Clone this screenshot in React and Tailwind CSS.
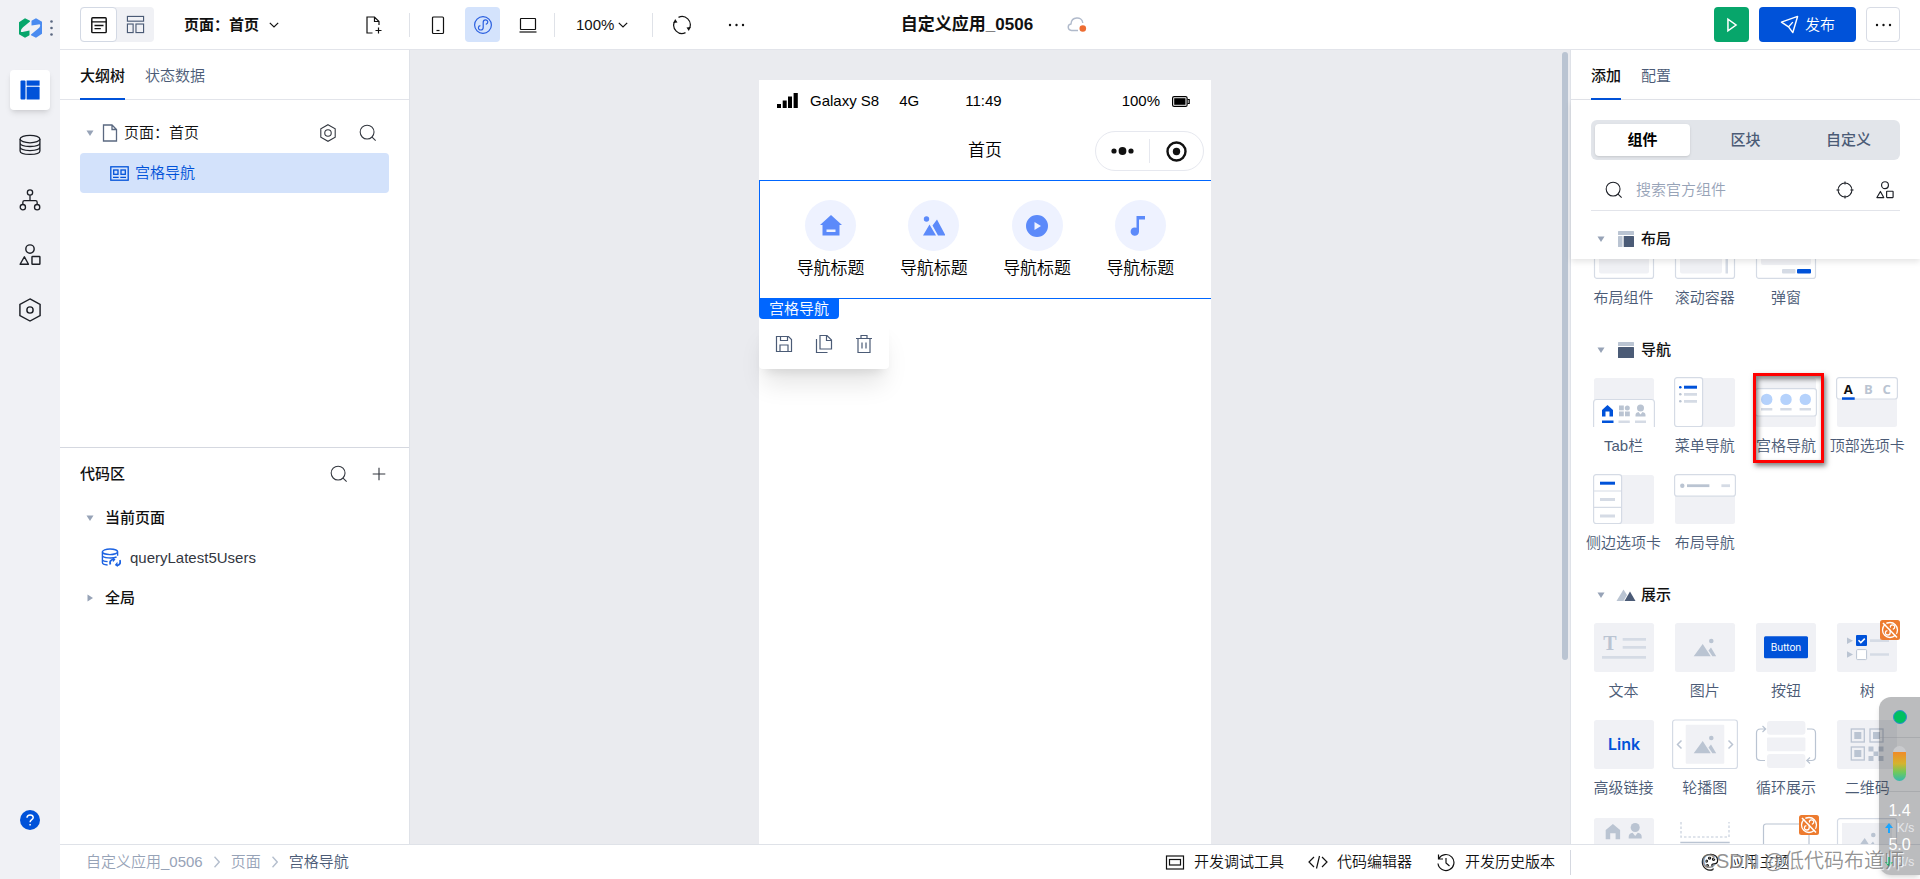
import { useState } from 'react';

const BLUE = '#0052d9';
const SOFT = '#f0f1f5';
const LINE = '#d5dbe5';
const MID = '#bac4d2';

function Icon({ size = 20, color = 'currentColor', sw = 1.2, children, className }) {
  return (
    <svg width={size} height={size} viewBox="0 0 20 20" fill="none" stroke={color} strokeWidth={sw} className={className} aria-hidden="true">
      {children}
    </svg>
  );
}

const SearchIcon = ({ size = 18 }) => (
  <Icon size={size}><circle cx="9" cy="9" r="7.7" /><path d="M14.5 14.5l4 4" /></Icon>
);

const ChevronDown = () => (
  <svg width="10" height="6" viewBox="0 0 10 6" fill="none" stroke="currentColor" strokeWidth="1.2" aria-hidden="true"><path d="M.8.8L5 5 9.2.8" /></svg>
);

const ChevronRight = () => (
  <svg width="6" height="12" viewBox="0 0 6 12" fill="none" stroke="#b5bfce" strokeWidth="1.4" aria-hidden="true"><path d="M.5.8L5.2 6 .5 11.2" /></svg>
);

const Caret = ({ closed }) => (
  <svg width="8" height="8" viewBox="0 0 8 8" fill="#97a3b7" aria-hidden="true">
    {closed ? <path d="M1.5.5v7L7 4z" /> : <path d="M.5 1.5h7L4 7z" />}
  </svg>
);

const ShapesIcon = ({ size = 20 }) => (
  <Icon size={size} sw={1.3}><circle cx="10" cy="4.6" r="3.8" /><path d="M4.9 11.6L1 18.4h7.600z" strokeLinejoin="round" /><rect x="11.8" y="11.4" width="7.200" height="7" rx=".5" /></Icon>
);

const Dots = () => (
  <svg width="17" height="4" viewBox="0 0 17 4" fill="currentColor" aria-hidden="true"><circle cx="2" cy="2" r="1.2" /><circle cx="8.5" cy="2" r="1.2" /><circle cx="15" cy="2" r="1.2" /></svg>
);

const LINK_CURVE = 'M10.2 12.6V7.4c0-3.2 4.6-3.2 4.6-.3 0 1.6-1.1 2-2 2.2M10.2 7.2v5.2c0 3.4-4.8 3.4-4.8.4 0-1.6 1.1-2.1 2-2.2';

function Sidebar() {
  const item = 'flex h-10 w-10 items-center justify-center rounded text-[#1c1f26]';
  return (
    <aside className="flex w-[60px] shrink-0 flex-col items-center bg-[#f0f1f5] pb-[39px]">
      <div className="flex h-[50px] w-full items-center justify-end gap-2 pt-[5px] pr-[7px]">
        <svg width="23" height="20" viewBox="0 0 23 20" aria-label="logo">
          <path d="M0 4.200L6 .3l5 2.400V17L6 19.700 0 16.200z" fill="#07a66b" />
          <path d="M23 15.800l-6 3.900-5-2.400V3L17 .3l6 3.500z" fill="#4a8bf0" />
          <path d="M1.800 13.200Q1.800 11 4 9.200L11 3.600 12.500 2v5.600l7-1.200q1.700-.2 1.700 1Q21.200 9 19 10.800L12 16.400 10.500 18v-5.600l-7 1.600q-1.500.3-1.700-.8z" fill={SOFT} />
        </svg>
        <svg width="3" height="16" viewBox="0 0 3 16" fill="#5a6880" aria-hidden="true"><circle cx="1.5" cy="1.5" r="1.3" /><circle cx="1.5" cy="8" r="1.3" /><circle cx="1.5" cy="14.5" r="1.3" /></svg>
      </div>
      <nav className="mt-5 flex flex-col gap-[15px]">
        <button aria-label="页面" className="flex h-10 w-10 items-center justify-center rounded bg-white shadow-md">
          <svg width="20" height="20" viewBox="0 0 20 20" fill={BLUE}><rect x=".5" y=".5" width="5" height="19" rx="1" /><rect x="6.6" y=".5" width="13" height="5.2" /><rect x="6.6" y="6.8" width="13" height="12.7" rx=".6" /></svg>
        </button>
        <button aria-label="数据" className={item}>
          <Icon size={22}><ellipse cx="10" cy="4.600" rx="9" ry="3.400" /><path d="M1 4.600v10.800c0 4.200 18 4.200 18 0V4.600M1 8.200c0 4.200 18 4.200 18 0M1 11.900c0 4.200 18 4.200 18 0" /></Icon>
        </button>
        <button aria-label="流程" className={item}>
          <Icon size={22}><circle cx="10" cy="3.200" r="2.400" /><circle cx="3.500" cy="16.500" r="2.400" /><circle cx="16.500" cy="16.500" r="2.400" /><path d="M10 5.600v4.900M3.500 14v-2q0-1.500 1.500-1.500h10q1.500 0 1.500 1.500v2" /></Icon>
        </button>
        <button aria-label="组件" className={item}><ShapesIcon size={22} /></button>
        <button aria-label="设置" className={item}>
          <Icon size={24}><path d="M10 .8l8.400 4.600v9.200L10 19.200l-8.400-4.600V5.400z" /><circle cx="10" cy="10" r="2.600" /></Icon>
        </button>
      </nav>
      <button aria-label="帮助" className="mt-auto flex h-10 w-10 shrink-0 items-center justify-center">
        <svg width="20" height="20" viewBox="0 0 20 20"><circle cx="10" cy="10" r="10" fill={BLUE} /><path d="M7 7.800c0-4 6.200-3.600 6.200-.3 0 2.200-3.100 2.200-3.100 4.700M10.100 14v1.600" fill="none" stroke="#fff" strokeWidth="1.500" /></svg>
      </button>
    </aside>
  );
}

function Header() {
  const tool = 'flex h-[35px] w-[35px] items-center justify-center rounded';
  return (
    <header className="flex h-[50px] shrink-0 items-center border-b border-[#e2e4ea] px-5">
      <div className="flex flex-1 items-center">
        <div className="flex rounded bg-[#f0f1f5]">
          <button aria-label="页面视图" className="flex h-[35px] w-[37px] items-center justify-center rounded border border-[#d3d9e4] bg-white">
            <Icon size={18} sw={1.6}><rect x="2" y="2" width="16" height="16.500" rx="1" /><path d="M2 6.500h16M5 10.500h10M5 14h7" /></Icon>
          </button>
          <button aria-label="布局视图" className="flex h-[35px] w-[37px] items-center justify-center text-[#4b5b76]">
            <Icon size={19}><rect x="1.500" y="1.500" width="17" height="5" /><rect x="1.500" y="9.500" width="6" height="9" /><rect x="10.500" y="9.500" width="8" height="9" /></Icon>
          </button>
        </div>
        <button className="ml-[30px] flex items-center gap-[10px] font-bold">页面：首页 <ChevronDown /></button>
        <button aria-label="新建页面" className="ml-[77px] flex h-[35px] w-[35px] items-center justify-center">
          <Icon size={20}><path d="M8.500 18H3V2h7.500l4.500 4.500V10M10.500 2v4.500H15M14.500 12.500v6M11.500 15.500h6" /></Icon>
        </button>
        <i className="ml-[18px] h-6 w-px bg-[#dfe2e8]" />
        <button aria-label="手机" className={`ml-[10px] ${tool}`}>
          <Icon size={20}><rect x="4.500" y="2" width="11" height="16.500" rx="1" /><path d="M8.500 15.500h3" /></Icon>
        </button>
        <button aria-label="小程序" className={`ml-[10px] bg-[#d4e3fc] text-[#2a5fdf] ${tool}`}>
          <Icon size={20}><circle cx="10" cy="10" r="8.400" /><path d={LINK_CURVE} /></Icon>
        </button>
        <button aria-label="电脑" className={`ml-[10px] ${tool}`}>
          <Icon size={20}><rect x="2.500" y="3.500" width="15" height="11" rx=".5" /><path d="M1.500 17h17" /></Icon>
        </button>
        <i className="ml-[9px] h-6 w-px bg-[#dfe2e8]" />
        <button className="ml-[21px] flex items-center gap-1">100% <ChevronDown /></button>
        <i className="ml-6 h-6 w-px bg-[#dfe2e8]" />
        <button aria-label="刷新" className={`ml-[11px] ${tool}`}>
          <Icon size={20}><path d="M6.500 2.400a8.200 8.200 0 0 1 11 10.800M13.500 17.600A8.200 8.200 0 0 1 2.500 6.800" /><path d="M1.200 8l2-4 2.300 3.600zM18.800 12l-2 4-2.300-3.600z" fill="currentColor" stroke="none" /></Icon>
        </button>
        <button aria-label="更多" className={`ml-5 ${tool}`}><Dots /></button>
      </div>
      <div className="flex items-center gap-[34px] pl-2">
        <h1 className="text-[17px] font-bold">自定义应用_0506</h1>
        <svg width="20" height="16" viewBox="0 0 20 16" aria-hidden="true">
          <path d="M11 13.500H4.500C.2 13 .2 7.500 4 7c.4-7.500 11-8 11.800-1" fill="none" stroke="#b0bacb" strokeWidth="1.400" />
          <circle cx="15.800" cy="11.500" r="3.300" fill="#ed6c32" />
        </svg>
      </div>
      <div className="flex flex-1 justify-end gap-[10px]">
        <button aria-label="预览" className="flex h-[35px] w-[35px] items-center justify-center rounded bg-[#07a66b] text-white">
          <Icon size={18} sw={1.700}><path d="M5.500 3.500v13l9-6.500z" /></Icon>
        </button>
        <button className="flex h-[35px] w-[97px] items-center justify-center gap-1.5 rounded bg-[#0052d9] text-white">
          <Icon size={19} sw={1.500}><path d="M1.500 7.500l17-6-5 17-4.500-6zM9 12.500l4.500-5" strokeLinejoin="round" /></Icon>
          发布
        </button>
        <button aria-label="更多操作" className="flex h-[35px] w-[34px] items-center justify-center rounded border border-[#d8dce5]"><Dots /></button>
      </div>
    </header>
  );
}

function Tabs({ items }) {
  return (
    <div role="tablist" className="flex h-[50px] shrink-0 gap-5 border-b border-[#e2e4ea] px-5">
      {items.map((t, i) => (
        <button key={t} role="tab" aria-selected={i === 0} className={i === 0 ? '-mb-px border-b-2 border-[#0052d9] pt-[3px] font-medium' : 'pt-0.5 text-[#4b5b76]'}>{t}</button>
      ))}
    </div>
  );
}

function LeftPanel() {
  return (
    <section className="flex w-[350px] shrink-0 flex-col border-r border-[#dfe2e8]">
      <div className="flex flex-1 flex-col">
        <Tabs items={['大纲树', '状态数据']} />
        <div className="px-5 pt-[13px]">
          <div className="flex h-10 items-center pr-3 pl-1.5">
            <Caret />
            <svg width="16" height="18" viewBox="0 0 16 18" fill="none" stroke="#5a6880" strokeWidth="1.300" className="mr-1.5 ml-2" aria-hidden="true"><path d="M1.500 1h8.500l4.500 4.500V17h-13zM10 1v4.500h4.500" /></svg>
            <span>页面：首页</span>
            <button aria-label="页面设置" className="ml-auto text-[#33373f]"><Icon size={18}><path d="M10 .8l8 4.600v9.200l-8 4.600-8-4.600V5.400z" /><circle cx="10" cy="10" r="3.600" /></Icon></button>
            <button aria-label="搜索节点" className="ml-[22px] text-[#33373f]"><SearchIcon /></button>
          </div>
          <div className="flex h-10 items-center gap-1.5 rounded bg-[#d3e2fb] pl-[30px] text-[#0052d9]">
            <svg width="19" height="15" viewBox="0 0 19 15" fill="none" stroke="currentColor" strokeWidth="1.300" aria-hidden="true"><rect x=".8" y=".8" width="17.400" height="13.400" /><rect x="3.700" y="4" width="4.300" height="4.300" /><rect x="11" y="4" width="4.300" height="4.300" /><path d="M3 11.300h5.700M10.300 11.300H16" /></svg>
            宫格导航
          </div>
        </div>
      </div>
      <div className="flex-1 border-t border-[#d5d8e0]">
        <div className="flex h-[50px] items-center px-5 pt-0.5">
          <h2 className="font-medium">代码区</h2>
          <button aria-label="搜索代码" className="ml-auto text-[#33373f]"><SearchIcon /></button>
          <button aria-label="新建" className="mr-[3px] ml-6 text-[#33373f]"><Icon size={14} sw={1.600}><path d="M10 1v18M1 10h18" /></Icon></button>
        </div>
        <div className="flex h-10 items-center gap-[11px] pl-[26px] font-medium"><Caret /> 当前页面</div>
        <div className="flex h-10 items-center gap-[9px] pl-[41px] text-[#33373f]">
          <svg width="20" height="19" viewBox="0 0 20 19" fill="none" stroke="#1d63e2" strokeWidth="1.400" aria-hidden="true">
            <ellipse cx="9" cy="3.800" rx="7.600" ry="2.800" /><path d="M1.400 3.800v10.700c0 1.700 2.600 2.300 5.200 2.500M16.600 3.800v4M1.400 7.600c0 2.600 11 3.200 14.200 1.200M1.400 11.400c0 1.400 2.600 2 5.200 2.200" />
            <path d="M9.500 16.500c-1.200-2.600.2-5 3-5.200M18.800 12.200c1.200 2.600-.2 5-3 5.200" strokeWidth="1.800" />
            <path d="M11.500 9l3 2.400-2.600 2.800zM16.800 19l-3-2 2.600-3.200z" fill="#1d63e2" stroke="none" />
          </svg>
          queryLatest5Users
        </div>
        <div className="flex h-10 items-center gap-[11px] pl-[26px] font-medium"><Caret closed /> 全局</div>
      </div>
    </section>
  );
}

const gridNav = [
  <path d="M11 0l11 10h-2.500v10.500h-17V10H0zM6.500 14.500v2.500h9v-2.500z" fillRule="evenodd" />,
  <g><circle cx="3.500" cy="4" r="2.700" /><path d="M0 20.500L6.500 9.500 13 20.500zM9.500 10.500L14 4.500l8.500 16h-7.500z" /></g>,
  <path d="M11 0a11 11 0 1 0 0 22 11 11 0 0 0 0-22zM8.500 7l6.500 4-6.500 4z" fillRule="evenodd" />,
  <path d="M7.500 1H16v3.500h-6v12a4.200 4.200 0 1 1-2.500-3.700z" />,
];

function Canvas() {
  return (
    <main className="flex min-w-0 flex-1 bg-[#eaebef]">
      <div className="flex flex-1 justify-center pt-[30px]">
        <div className="w-[452px] bg-white text-black">
          <div className="grid h-[42px] grid-cols-[1fr_auto_1fr] items-center pr-[21px] pl-[18px]">
            <div className="flex items-center">
              <svg width="21" height="16" viewBox="0 0 21 16" aria-hidden="true"><path d="M0 11h4v4H0zM5.700 7.500h4V15h-4zM11 3.500h4V15h-4zM16.600 0h4.200v15h-4.200z" /></svg>
              <span className="ml-3">Galaxy S8</span>
              <span className="ml-5">4G</span>
            </div>
            <span>11:49</span>
            <div className="flex items-center justify-end gap-3">
              <span>100%</span>
              <svg width="18" height="11" viewBox="0 0 18 11" fill="none" stroke="#000" strokeWidth="1.200" aria-hidden="true"><rect x=".6" y=".6" width="14.500" height="9.800" rx="1.500" /><rect x="2.200" y="2.200" width="11.300" height="6.600" fill="#000" stroke="none" /><path d="M15.500 3.500h1.700v4h-1.700" /></svg>
            </div>
          </div>
          <div className="grid h-[58px] grid-cols-[1fr_auto_1fr] items-center px-[7px]">
            <span />
            <span className="text-[17px]">首页</span>
            <div className="flex h-10 w-[109px] items-center justify-self-end rounded-full border border-[#e6e8ef]">
              <button aria-label="菜单" className="flex flex-1 justify-center">
                <svg width="23" height="8" viewBox="0 0 23 8" fill="#111"><circle cx="3" cy="4" r="2.600" /><circle cx="11.500" cy="4" r="3.900" /><circle cx="20" cy="4" r="2.600" /></svg>
              </button>
              <i className="h-6 w-px bg-[#e6e8ef]" />
              <button aria-label="关闭" className="flex flex-1 justify-center">
                <svg width="21" height="21" viewBox="0 0 21 21"><circle cx="10.500" cy="10.500" r="9" fill="none" stroke="#111" strokeWidth="2.400" /><circle cx="10.500" cy="10.500" r="3.700" fill="#111" /></svg>
              </button>
            </div>
          </div>
          <div className="relative grid grid-cols-4 border-y border-l border-[#0066ff] px-[19px] pt-[19px] pb-[17px]">
            {gridNav.map((d, i) => (
              <div key={i} className="flex flex-col items-center gap-1.5">
                <div className="flex h-[51px] w-[51px] items-center justify-center rounded-full bg-[#eef2ff]">
                  <svg width="22" height="22" viewBox="0 0 22 22" fill="#5c8afa" aria-hidden="true">{d}</svg>
                </div>
                <span className="text-[17px] leading-6">导航标题</span>
              </div>
            ))}
            <div className="absolute top-full left-0 -ml-px flex flex-col items-start pt-px">
              <span className="flex h-5 w-20 items-center justify-center rounded-b bg-[#0066ff] text-white">宫格导航</span>
              <div className="flex h-[50px] w-[130px] items-center justify-center gap-5 rounded bg-white text-[#4b5b76] shadow-xl">
                <button aria-label="保存"><Icon><path d="M2.500 2.500h12l3 3v12h-15zM6.500 2.500v4h7v-4M6 17.500V11h8v6.500" /></Icon></button>
                <button aria-label="复制"><Icon><path d="M6 1.500h7l4.500 4.500v9H6zM12.500 1.500v5h5M2.500 5v13.500h11" /></Icon></button>
                <button aria-label="删除"><Icon><path d="M2 4.500h16M7 4.500v-3h6v3M4 4.500v14h12v-14M8 8.500v6M12 8.500v6" /></Icon></button>
              </div>
            </div>
          </div>
        </div>
      </div>
      <div className="flex w-[10px] justify-center pt-0.5"><i className="h-[608px] w-1.5 rounded-full bg-[#bac4d2]" /></div>
    </main>
  );
}

const Bg = () => <rect x="3" y="1" width="60" height="49" rx="2.500" fill={SOFT} />;
const Box = (p) => <rect fill="#fff" stroke={LINE} strokeWidth="1.200" rx="2.500" {...p} />;
const Mountain = () => (
  <g fill={MID}><path d="M21.700 34.200L30.700 22l8 12.200zM36.500 28.500l2.500-3 5.200 8.700h-3.800z" /><circle cx="39.300" cy="19" r="2.300" /></g>
);
const Person = ({ x, y, s = 1 }) => (
  <g fill={MID} transform={`translate(${x} ${y}) scale(${s})`}><circle cx="5" cy="3.500" r="3.500" /><path d="M0 12V10.500Q0 8 3 7.500L5 10l2-2.500q3 .5 3 3V12z" /></g>
);
const Badge = ({ y = -2 }) => (
  <g transform={`translate(46 ${y})`}>
    <rect width="20" height="20" rx="2.500" fill="#ed7b2f" />
    <g fill="none" stroke="#fff" strokeWidth="1.300"><circle cx="10" cy="10" r="7.500" /><path d={LINK_CURVE} /></g>
    <path d="M4.500 2.500l13 13.500" stroke="#ed7b2f" strokeWidth="1.300" /><path d="M3 3l14 14.500" stroke="#fff" strokeWidth="1.500" />
  </g>
);

const layoutItems = [
  ['布局组件', <><Box x="3.500" y=".6" width="59" height="48.800" /><rect x="8" y="5" width="50" height="39.500" rx="2" fill={SOFT} /></>],
  ['滚动容器', <><Box x="3.500" y=".6" width="59" height="48.800" /><rect x="8" y="5" width="42" height="39.500" rx="2" fill={SOFT} /><rect x="53.500" y="5" width="2.500" height="39.500" fill={LINE} /></>],
  ['弹窗', <><Box x="3.500" y=".6" width="59" height="48.800" /><rect x="8" y="5" width="50" height="31" rx="2" fill={SOFT} /><rect x="29" y="40" width="13.500" height="4.500" rx="1" fill={LINE} /><rect x="44" y="40" width="14" height="4.500" rx="1" fill={BLUE} /></>],
];

const navItems = [
  ['Tab栏', <>
    <Bg />
    <path d="M2.600 50V25.500q0-3 3-3h54.800q3 0 3 3V50" fill="#fff" stroke={LINE} strokeWidth="1.200" />
    <path d="M11 39.500V33l5.500-5 5.500 5v6.500h-3.500v-5h-4v5z" fill={BLUE} /><rect x="11" y="43.500" width="11.500" height="2.500" fill={BLUE} />
    <g fill={MID}><rect x="28" y="28.500" width="4.800" height="4.800" /><circle cx="36.300" cy="30.900" r="2.500" /><rect x="28" y="34.500" width="4.800" height="4.800" /><rect x="34" y="34.500" width="4.800" height="4.800" /></g>
    <Person x={44.500} y={27.500} />
    <path d="M27.500 44.800h11.300M44 44.800h11" stroke={LINE} strokeWidth="2.500" />
  </>],
  ['菜单导航', <>
    <Bg /><Box x="2.600" y=".6" width="28" height="48.900" />
    <circle cx="8.300" cy="10.200" r="1.300" fill={BLUE} /><path d="M12 10.200h13" stroke={BLUE} strokeWidth="3" />
    <g fill={MID}><circle cx="8.300" cy="17.300" r="1.300" /><circle cx="8.300" cy="24.300" r="1.300" /></g><path d="M12 17.300h13M12 24.300h13" stroke={LINE} strokeWidth="2.800" />
  </>],
  ['宫格导航', <>
    <Bg /><Box x="2.600" y="11.600" width="60.800" height="27.400" />
    <g fill="#b5d2fc"><circle cx="13.700" cy="22.400" r="5.700" /><circle cx="33" cy="22.400" r="5.700" /><circle cx="52.300" cy="22.400" r="5.700" /></g>
    <path d="M8 32.300h11.300M27.300 32.300h11.300M46.600 32.300H58" stroke={LINE} strokeWidth="2.600" />
  </>],
  ['顶部选项卡', <>
    <Bg /><Box x="2.600" y=".6" width="60.800" height="21.400" />
    <g fontSize="13" fontWeight="700" textAnchor="middle" fontFamily="Open Sans, sans-serif"><text x="14.300" y="16.500" fill="#111">A</text><text x="34.300" y="16.500" fill={MID}>B</text><text x="52.700" y="16.500" fill={MID}>C</text></g>
    <rect x="8" y="20.300" width="12.700" height="2.500" fill={BLUE} />
  </>],
  ['侧边选项卡', <>
    <Bg /><Box x="2.600" y=".6" width="28" height="48.900" /><path d="M2.600 17h28M2.600 33.300h28" stroke={LINE} strokeWidth="1.200" />
    <path d="M9 9.200h15" stroke={BLUE} strokeWidth="3" /><path d="M9 25.400h15M9 42h15" stroke={LINE} strokeWidth="3" />
  </>],
  ['布局导航', <>
    <Bg /><Box x="2.600" y=".6" width="60.800" height="21.600" /><circle cx="10.300" cy="11.700" r="2.200" fill={MID} />
    <path d="M15 11.700h22.400" stroke={MID} strokeWidth="2.800" /><path d="M49.400 11.700H58" stroke={LINE} strokeWidth="2.800" />
  </>],
];

const qr = (x, y) => <g key={`${x}${y}`}><rect x={x} y={y} width="13" height="13" fill="none" stroke={MID} strokeWidth="1.300" /><rect x={x + 3} y={y + 3} width="7" height="7" fill={MID} /></g>;

const showItems = [
  ['文本', <>
    <Bg /><text x="19" y="28" fontSize="20" fontWeight="700" textAnchor="middle" fontFamily="Liberation Serif, serif" fill={MID}>T</text>
    <path d="M31.700 17.400H55M31.700 25.400H55M11 35.300h44" stroke={LINE} strokeWidth="2.700" />
  </>],
  ['图片', <><Bg /><Mountain /></>],
  ['按钮', <><Bg /><rect x="11" y="14.300" width="44" height="22" rx="1.500" fill={BLUE} /><text x="33" y="29" fontSize="10" fontWeight="400" textAnchor="middle" fontFamily="Inter, sans-serif" fill="#fff">Button</text></>],
  ['树', <>
    <Bg /><path d="M13 15.500l6 3.300-6 3.300zM13 29.200l6 3.300-6 3.300z" fill={MID} />
    <rect x="22" y="13" width="11" height="11" rx="1" fill={BLUE} /><path d="M24.500 18.300l2.300 2.300 4-4" fill="none" stroke="#fff" strokeWidth="1.500" />
    <rect x="22.600" y="27.600" width="10" height="10" rx="1" fill="#fff" stroke={MID} /><path d="M36 18.700h19M36 32.500h19" stroke={LINE} strokeWidth="2.700" />
    <Badge />
  </>],
  ['高级链接', <><Bg /><text x="33" y="31" fontSize="16" fontWeight="600" textAnchor="middle" fontFamily="Inter, sans-serif" fill={BLUE}>Link</text></>],
  ['轮播图', <>
    <Box x=".6" y="1" width="64.800" height="48.500" /><rect x="13.700" y="5.700" width="38.600" height="39" rx="1" fill={SOFT} /><Mountain />
    <path d="M9.500 21.500l-4 4 4 4M56.500 21.500l4 4-4 4" fill="none" stroke={MID} strokeWidth="1.500" />
  </>],
  ['循环展示', <>
    <g fill={SOFT}><rect x="14" y="2" width="38.400" height="13.700" rx="3" /><rect x="14" y="18.400" width="38.400" height="13.800" rx="1" /><rect x="14" y="35" width="38.400" height="14" rx="3" /></g>
    <path d="M12 41.500H7.500q-4 0-4-4V14q0-4 4-4H12M9.500 7l3.200 3-3.200 3M54 10h4.500q4 0 4 4v23.500q0 4-4 4H54M57 38.500l-3.200 3 3.200 3" fill="none" stroke={MID} strokeWidth="1.200" />
  </>],
  ['二维码', <>
    <Bg />{qr(17.300, 10)}{qr(36, 10)}{qr(17.300, 28)}
    <path d="M34.500 27.500h5v5h-5zM44.500 27.500h5v5h-5zM39.500 32.500h5v4.500h-5zM34.500 37h5v5h-5zM44.500 37h5v5h-5z" fill={MID} />
  </>],
  ['', <>
    <rect x="3" y="2" width="60" height="48" rx="2.500" fill={SOFT} />
    <path d="M14.700 23.300V14l7.200-6 7.200 6v9.300h-4.500v-6h-5.400v6z" fill={MID} /><Person x={37.700} y={7} s={1.300} />
  </>],
  ['', <><path d="M9 6v15h48V6" fill="none" stroke={LINE} strokeWidth="1.600" strokeDasharray="2.500 2" /><path d="M8.300 26.500h49.400" stroke={MID} strokeWidth="1.500" /></>],
  ['', <><Box x="10.500" y="8" width="45.500" height="42" stroke={MID} /><Badge y={-1} /></>],
  ['', <><Box x="3.500" y="2.600" width="59" height="47" /><rect x="8" y="7" width="50" height="40" fill={SOFT} /><Mountain /></>],
];

const layoutIcon = <><rect width="16" height="4" rx=".5" fill={MID} /><rect y="5" width="4.500" height="11" rx=".5" fill={MID} /><rect x="5.700" y="5" width="10.300" height="11" rx=".5" fill="#4b5b76" /></>;
const navIcon = <><rect width="16" height="4" rx=".5" fill={MID} /><rect y="5" width="16" height="11" rx=".5" fill="#4b5b76" /></>;
const showIcon = <><path d="M-1.500 14L5.500 2.500 9 8l-3.500 6z" fill={MID} /><path d="M6.500 14l5.500-9.500 5.500 9.500z" fill="#4b5b76" /></>;

function GroupHead({ icon, title }) {
  return (
    <button className="flex h-10 w-full items-center pl-[26px] font-medium">
      <Caret />
      <svg width="16" height="16" viewBox="0 0 16 16" className="mr-[7px] ml-[13px] overflow-visible" aria-hidden="true">{icon}</svg>
      {title}
    </button>
  );
}

function CardGrid({ items, marked }) {
  return (
    <div className="grid grid-cols-4 gap-y-4 px-3">
      {items.map(([label, art], i) => (
        <button key={i} className="relative flex flex-col items-center">
          <svg width="66" height="50" viewBox="0 0 66 50" className="overflow-visible" aria-hidden="true">{art}</svg>
          <span className="mt-[7px] h-6 leading-6 whitespace-nowrap text-[#4b5b76]">{label}</span>
          {label === marked && <span className="absolute -top-1 right-[3px] -bottom-[5px] left-[7px] border-3 border-[#ff0000] shadow-[2px_3px_5px_#00000080,inset_2px_3px_5px_#00000080]" />}
        </button>
      ))}
    </div>
  );
}

function RightPanel() {
  const [query, setQuery] = useState('');
  return (
    <section className="flex w-[350px] shrink-0 flex-col border-l border-[#dfe2e8]">
      <Tabs items={['添加', '配置']} />
      <div className="relative z-10 bg-white pt-5 shadow-[0_3px_6px_#0000001a]">
        <div className="mx-5 grid h-10 grid-cols-3 gap-2 rounded-md bg-[#e2e5ea] p-1 font-medium text-[#4b5b76]">
          <button className="rounded-sm bg-white font-bold text-black shadow-sm">组件</button>
          <button>区块</button>
          <button>自定义</button>
        </div>
        <div className="mx-5 mt-[10px] flex h-[41px] items-center border-b border-[#e2e4ea] pr-1.5 pl-3.5 text-[#1c1f26]">
          <SearchIcon />
          <input value={query} onChange={(e) => setQuery(e.target.value)} aria-label="搜索官方组件" placeholder="搜索官方组件" className="ml-[13px] min-w-0 flex-1 outline-none placeholder:text-[#97a3b7]" />
          <button aria-label="定位"><Icon size={18}><circle cx="10" cy="10" r="7.700" /><path d="M10 .5v3.500M10 16v3.500M.5 10H4M16 10h3.500" /></Icon></button>
          <button aria-label="组件库" className="ml-[22px]"><ShapesIcon size={18} /></button>
        </div>
        <div className="pt-2"><GroupHead icon={layoutIcon} title="布局" /></div>
      </div>
      <div className="min-h-0 flex-1 overflow-hidden">
        <div className="-mt-[30px]"><CardGrid items={layoutItems} /></div>
        <div className="mt-5 mb-[7px]"><GroupHead icon={navIcon} title="导航" /></div>
        <CardGrid items={navItems} marked="宫格导航" />
        <div className="mt-5 mb-[7px]"><GroupHead icon={showIcon} title="展示" /></div>
        <CardGrid items={showItems} />
      </div>
    </section>
  );
}

function Footer() {
  return (
    <footer className="flex h-[35px] shrink-0 items-center border-t border-[#dfe2e8]">
      <nav className="flex items-center gap-[11px] pl-[26px] text-[#97a3b7]">
        <a href="#app">自定义应用_0506</a>
        <ChevronRight />
        <a href="#page">页面</a>
        <ChevronRight />
        <a href="#grid" className="text-[#4b5b76]">宫格导航</a>
      </nav>
      <div className="ml-auto flex items-center gap-6 pr-[15px]">
        <button className="flex items-center gap-[9px]"><Icon><rect x="1.500" y="4" width="17" height="13" /><rect x="4.500" y="7.500" width="11" height="5.500" /></Icon>开发调试工具</button>
        <button className="flex items-center gap-[9px]"><Icon><path d="M6 5L1 10l5 5M14 5l5 5-5 5M11.500 4l-3 12.500" /></Icon>代码编辑器</button>
        <button className="flex items-center gap-[9px]"><Icon><path d="M3 6.500a8 8 0 1 1-1 5M2.500 2.500v4.500H7M10 6v5l3.500 3" /></Icon>开发历史版本</button>
      </div>
      <div className="flex h-[25px] w-[350px] items-center justify-center border-l border-[#d5d8e0]">
        <button className="flex items-center gap-[10px]">
          <Icon size={18} sw={1.400}><path d="M13 18.500C8 20.500 1.500 16.500 1.500 10S7 1.500 11 1.500s7.500 3 7.500 6.500-2 4-4 4-3 1-2 3 1.500 2.800.5 3.500z" /><circle cx="6" cy="9" r="1.200" /><circle cx="9.500" cy="5.500" r="1.200" /><circle cx="14" cy="7" r="1.200" /><circle cx="7" cy="14" r="1.200" /></Icon>
          应用主题
        </button>
      </div>
    </footer>
  );
}

function Speed({ value, color, down }) {
  return (
    <div className="flex flex-col">
      <b className="text-center text-base leading-[18px] font-medium">{value}</b>
      <div className="flex items-center justify-center gap-1 text-xs leading-4 text-[#e6e7ea]">
        <svg width="8" height="10" viewBox="0 0 8 10" fill={color} aria-hidden="true"><path d={down ? 'M4 10L0 5h3V0h2v5h3z' : 'M4 0l4 5H5v5H3V5H0z'} /></svg>
        K/s
      </div>
    </div>
  );
}

function Monitor() {
  return (
    <div className="absolute right-0 bottom-1 z-20 flex h-[178px] w-[41px] flex-col items-center rounded-l-xl bg-[#3c3e46]/35 pt-[13px] text-white shadow-md">
      <i className="h-3.5 w-3.5 rounded-full border border-[#2f8fd0] bg-[#00c060]" />
      <i className="mt-[13px] h-px w-full bg-[#8f9196]/40" />
      <i className="mt-2 h-[35px] w-[13px] rounded-full bg-[linear-gradient(#c9cacd_0_18%,#f08c28_18%,#d5b32e_50%,#6fc95c_75%,#35b8b0)]" />
      <i className="mt-2.5 mb-[10px] h-px w-full bg-[#8f9196]/40" />
      <Speed value="1.4" color="#1aa5ff" />
      <Speed value="5.0" color="#00b45a" down />
    </div>
  );
}

export default function App() {
  return (
    <div className="relative flex h-screen overflow-hidden bg-white font-['Liberation_Sans','Noto_Sans_CJK_SC',sans-serif] text-[15px] leading-5 font-[350] text-[#111]">
      <Sidebar />
      <div className="flex min-w-0 flex-1 flex-col">
        <Header />
        <div className="flex min-h-0 flex-1">
          <LeftPanel />
          <Canvas />
          <RightPanel />
        </div>
        <Footer />
      </div>
      <span className="pointer-events-none absolute right-4 bottom-1 z-30 text-xl leading-7 text-[#777]/80 [text-shadow:1px_1px_1px_#fff]">CSDN @低代码布道师</span>
      <Monitor />
    </div>
  );
}
